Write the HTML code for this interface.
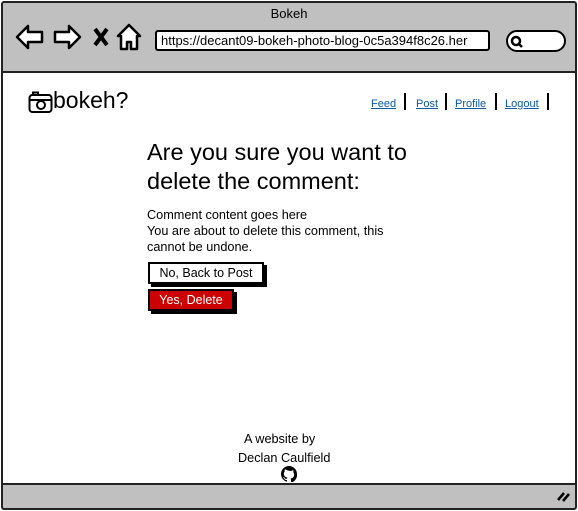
<!DOCTYPE html>
<html><head><style>
*{margin:0;padding:0;box-sizing:border-box}
body{width:578px;height:511px;overflow:hidden;background:#fff;font-family:"Liberation Sans",sans-serif;color:#000;position:relative}
.a{position:absolute}
.frame{left:1px;top:1px;width:576px;height:509px;border:2px solid #222;border-radius:3px}
.top{left:2px;top:2px;width:574px;height:71px;background:#c0c0c0;border-bottom:2px solid #222}
.bot{left:2px;top:483px;width:574px;height:26px;background:#c0c0c0;border-top:2px solid #222}
.nav a{color:#0b5aa8;text-decoration:underline;font-size:11px}
.sep{width:2px;height:17px;background:#000;top:93px}
.t{font-size:12.7px}
</style></head><body>
<div class="a top"></div>
<div class="a bot"></div>
<div class="a frame"></div>
<div class="a" style="left:0;width:578px;top:6px;text-align:center;font-size:13px">Bokeh</div>
<svg class="a" style="left:14px;top:22px" width="130" height="30" viewBox="0 0 130 30">
<g fill="#fff" stroke="#000" stroke-width="2.5" stroke-linejoin="round">
<path d="M3 15 L14 4 L14 10 L28 10 L28 20 L14 20 L14 26 Z"/>
<path d="M66 15 L55 4 L55 10 L41 10 L41 20 L55 20 L55 26 Z"/>
<path d="M115 3 L104 14 L107 14 L107 27 L113 27 L113 20 L117 20 L117 27 L123 27 L123 14 L126 14 Z"/>
</g>
<path d="M81 7 L93 23 M93 7 L81 23" stroke="#000" stroke-width="4"/>
</svg>
<div class="a" style="left:155px;top:30px;width:335px;height:21px;background:#fff;border:2px solid #000;border-radius:3px;font-size:13px;padding:1px 0 0 4px;white-space:nowrap;overflow:hidden">https://decant09-bokeh-photo-blog-0c5a394f8c26.her</div>
<div class="a" style="left:506px;top:30px;width:60px;height:22px;background:#fff;border:2px solid #000;border-radius:11px"></div>
<svg class="a" style="left:510px;top:35px" width="14" height="14"><circle cx="6" cy="6" r="4" fill="none" stroke="#000" stroke-width="2.5"/><path d="M9 9 L12 12" stroke="#000" stroke-width="2.5"/></svg>
<svg class="a" style="left:28px;top:91px" width="25" height="23" viewBox="0 0 25 23"><rect x="1.5" y="4" width="22" height="17" rx="3" fill="none" stroke="#000" stroke-width="2"/><path d="M1.5 9 H23.5 M5 4 V1.5 H10 V4" fill="none" stroke="#000" stroke-width="2"/><circle cx="13" cy="14" r="4" fill="none" stroke="#000" stroke-width="2"/></svg>
<div class="a" style="left:53px;top:87px;font-size:23px">bokeh?</div>
<div class="a nav" style="left:371px;top:94px"><a>Feed</a></div>
<div class="a sep" style="left:404px"></div>
<div class="a nav" style="left:416px;top:94px"><a>Post</a></div>
<div class="a sep" style="left:445px"></div>
<div class="a nav" style="left:455px;top:94px"><a>Profile</a></div>
<div class="a sep" style="left:495px"></div>
<div class="a nav" style="left:505px;top:94px"><a>Logout</a></div>
<div class="a sep" style="left:547px"></div>
<div class="a" style="left:147px;top:138px;font-size:23.5px;line-height:29px">Are you sure you want to<br>delete the comment:</div>
<div class="a t" style="left:147px;top:207px;line-height:16px">Comment content goes here<br>You are about to delete this comment, this<br>cannot be undone.</div>
<div class="a" style="left:151px;top:265px;width:116px;height:22px;background:#000"></div>
<div class="a t" style="left:148px;top:262px;width:116px;height:22px;background:#fff;border:2px solid #000;text-align:center;line-height:18px;font-size:12.5px">No, Back to Post</div>
<div class="a" style="left:151px;top:292px;width:86px;height:22px;background:#000"></div>
<div class="a t" style="left:148px;top:289px;width:86px;height:22px;background:#c00;border:2px solid #000;color:#fff;text-align:center;line-height:18px;font-size:12.5px">Yes, Delete</div>
<div class="a t" style="left:244px;top:432px">A website by</div>
<div class="a t" style="left:238px;top:451px">Declan Caulfield</div>
<svg class="a" style="left:281px;top:466px" width="16" height="16" viewBox="0 0 16 16"><path d="M8 0C3.58 0 0 3.580 0 8c0 3.54 2.29 6.53 5.47 7.59.4.07.55-.17.55-.38v-1.33c-2.23.48-2.7-1.070-2.7-1.070-.36-.92-.89-1.17-.89-1.17-.73-.5.06-.49.06-.49.8.06 1.23.83 1.23.83.71 1.22 1.87.87 2.33.66.07-.52.28-.87.5-1.07-1.78-.2-3.64-.89-3.64-3.95 0-.87.31-1.59.82-2.15-.08-.2-.36-1.02.08-2.12 0 0 .67-.21 2.2.82A7.6 7.6 0 0 1 8 4.8c.68 0 1.36.09 2 .27 1.53-1.04 2.2-.82 2.2-.82.44 1.1.16 1.92.08 2.12.51.56.82 1.27.82 2.15 0 3.07-1.87 3.75-3.65 3.95.29.25.54.73.54 1.48v2.2c0 .21.15.46.55.38A8 8 0 0 0 16 8c0-4.42-3.58-8-8-8z"/></svg>
<svg class="a" style="left:556px;top:490px" width="14" height="12"><path d="M2 10 L8 3 M7 11 L13 4" stroke="#000" stroke-width="2.5"/></svg>
</body></html>
